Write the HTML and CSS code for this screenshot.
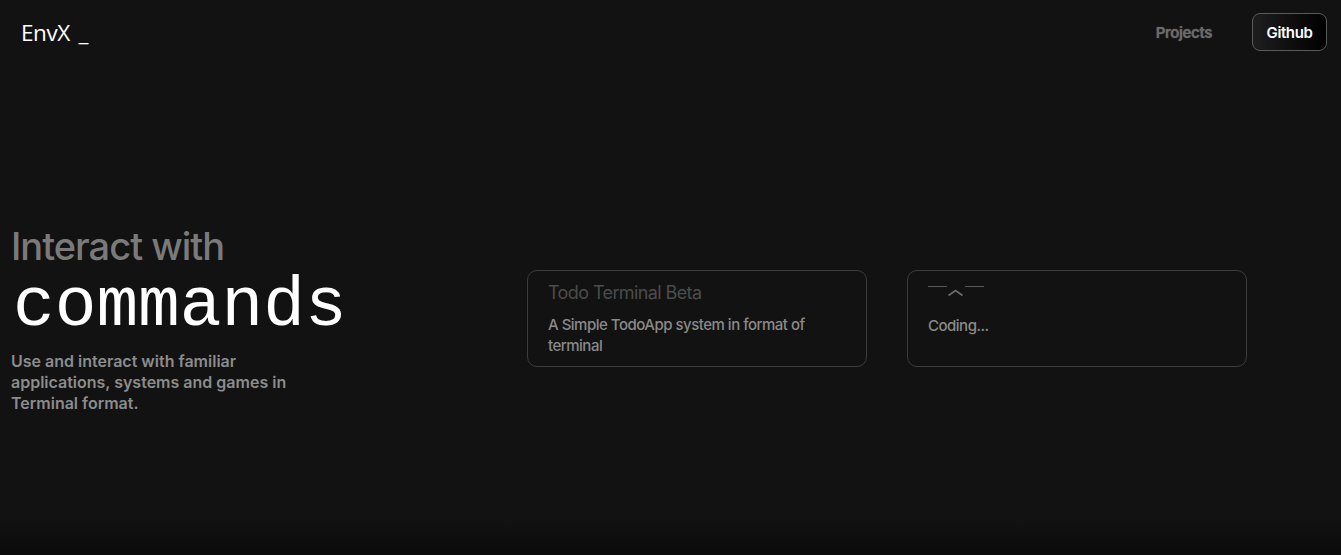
FILE: index.html
```html
<!DOCTYPE html>
<html lang="en">
<head>
<meta charset="utf-8">
<title>EnvX</title>
<link rel="stylesheet" href="styles.css">
</head>
<body>
<header class="topbar">
  <div class="logo">EnvX _</div>
  <nav class="nav">
    <a class="nav-link" href="#">Projects</a>
    <a class="nav-btn" href="#">Github</a>
  </nav>
</header>
<main class="hero">
  <section class="intro">
    <h1 class="intro-title">Interact with</h1>
    <div class="intro-cmd">commands</div>
    <p class="intro-text">Use and interact with familiar applications, systems and games in Terminal format.</p>
  </section>
  <section class="cards">
    <article class="card">
      <h2 class="card-title">Todo Terminal Beta</h2>
      <p class="card-text">A Simple TodoApp system in format of terminal</p>
    </article>
    <article class="card">
      <svg class="card-icon" width="58" height="16" viewBox="0 0 58 16">
        <path d="M0 1.5H19M37 1.5H56" stroke="#5a5a5a" stroke-width="1.2" fill="none"/>
        <path d="M20.5 10.5L27.5 5.5L34.5 10.5" stroke="#6a6a6a" stroke-width="1.8" fill="none"/>
      </svg>
      <p class="card-text card-coding">Coding...</p>
    </article>
  </section>
</main>
</body>
</html>
```
FILE: styles.css
```css
html, body {
  margin: 0;
  padding: 0;
}
body {
  background: #121212;
  background-image: linear-gradient(to bottom, #121212 0, #121212 520px, #0a0a0a 555px);
  height: 555px;
  font-family: Inter, "Noto Sans", sans-serif;
  color: #fff;
  overflow: hidden;
}
.topbar {
  display: flex;
  align-items: center;
  justify-content: space-between;
  height: 38px;
  padding: 13px 14px 0 21px;
}
.logo {
  font-family: "Open Sans", sans-serif;
  font-size: 22.5px;
  letter-spacing: -0.4px;
  word-spacing: 3px;
  color: #fff;
}
.nav {
  display: flex;
  align-items: center;
  gap: 40px;
}
.nav-link {
  color: #6a6a6a;
  font-size: 15px;
  font-weight: 600;
  letter-spacing: -0.4px;
  text-decoration: none;
  text-shadow: 0 0 1px #6a6a6a;
}
.nav-btn {
  display: flex;
  align-items: center;
  justify-content: center;
  box-sizing: border-box;
  width: 75px;
  height: 38px;
  border: 1px solid #5a5a5a;
  border-radius: 8px;
  background: linear-gradient(to right, #1e1e1e, #000);
  color: #fff;
  font-size: 15px;
  font-weight: 600;
  letter-spacing: -0.4px;
  text-decoration: none;
}
.hero {
  display: flex;
  align-items: center;
  box-sizing: border-box;
  height: 504px;
  padding: 30px 0 0 11px;
}
.intro {
  width: 516px;
}
.intro-title {
  margin: 0;
  font-size: 38px;
  font-weight: 500;
  letter-spacing: -1px;
  line-height: 46px;
  color: #7a7a7a;
}
.intro-cmd {
  font-family: "Liberation Mono", "Courier New", monospace;
  font-size: 69.5px;
  line-height: 68px;
  margin: 4px 0 10px 2px;
  color: #fff;
}
.intro-text {
  margin: 0;
  width: 300px;
  font-size: 16px;
  line-height: 21px;
  font-weight: 600;
  color: #8c8c8c;
}
.cards {
  display: flex;
  gap: 40px;
}
.card {
  box-sizing: border-box;
  width: 340px;
  height: 97px;
  padding: 11px 20px;
  border: 1px solid #3c3c3c;
  border-radius: 10px;
}
.card-title {
  margin: 0 0 10px;
  font-size: 18px;
  font-weight: 400;
  letter-spacing: -0.6px;
  line-height: 22px;
  color: #4c4c4c;
}
.card-text {
  margin: 0;
  font-size: 15px;
  font-weight: 500;
  letter-spacing: -0.5px;
  line-height: 21px;
  color: #8a8a8a;
}
.card-icon {
  display: block;
  margin-top: 3px;
}
.card-coding {
  margin-top: 14px;
}
```
